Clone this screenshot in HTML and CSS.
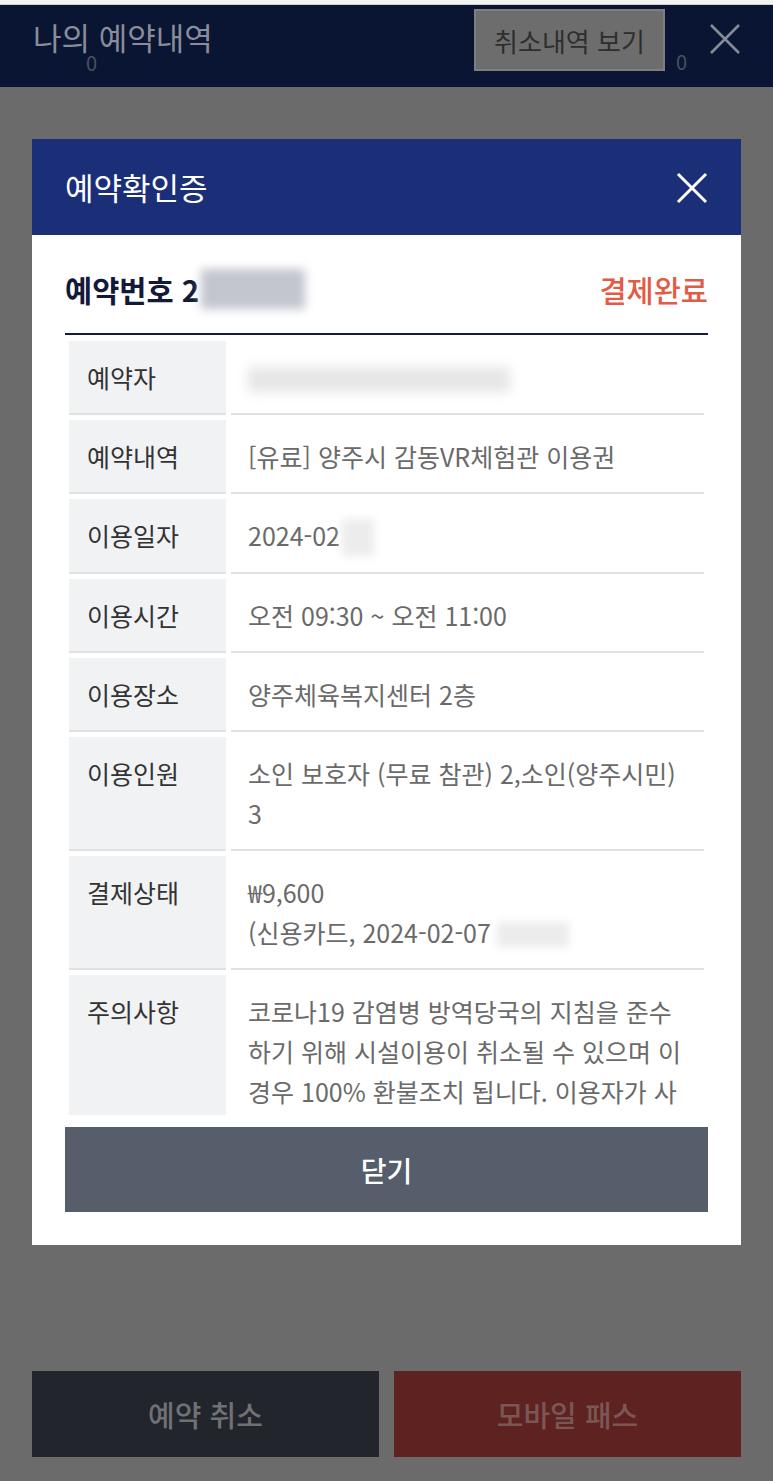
FILE: index.html
```html
<!DOCTYPE html>
<html lang="ko">
<head>
<meta charset="utf-8">
<title>나의 예약내역</title>
<link rel="stylesheet" href="styles.css">
</head>
<body>
<div class="page">
  <div class="topstrip"></div>
  <header class="appbar">
    <h1 class="appbar-title">나의 예약내역<span class="badge badge-title">0</span></h1>
    <div class="appbar-actions">
      <button class="cancel-history">취소내역 보기</button>
      <span class="badge badge-btn">0</span>
      <span class="appbar-close">
        <svg viewBox="0 0 32 32" width="32" height="32"><path d="M2 2 L30 30 M30 2 L2 30" stroke="#878b95" stroke-width="2.6" fill="none"/></svg>
      </span>
    </div>
  </header>
  <main class="content"></main>
  <footer class="bottom-bar">
    <button class="btn-cancel">예약 취소</button>
    <button class="btn-pass">모바일 패스</button>
  </footer>
</div>

<div class="modal">
  <div class="modal-head">
    <h2 class="modal-title">예약확인증</h2>
    <span class="modal-close">
      <svg viewBox="0 0 32 32" width="32" height="32"><path d="M2 2 L30 30 M30 2 L2 30" stroke="#ffffff" stroke-width="3" fill="none"/></svg>
    </span>
  </div>
  <div class="modal-body">
    <div class="status-row">
      <div class="res-no">예약번호 2<span class="blur blur-no"></span></div>
      <div class="res-state">결제완료</div>
    </div>
    <div class="table-wrap">
      <div class="info-grid">
        <div class="lbl">예약자</div>
        <div class="val"><span class="blur blur-name"></span></div>

        <div class="lbl">예약내역</div>
        <div class="val">[유료] 양주시 감동VR체험관 이용권</div>

        <div class="lbl">이용일자</div>
        <div class="val">2024-02<span class="blur blur-date"></span></div>

        <div class="lbl">이용시간</div>
        <div class="val">오전 09:30 ~ 오전 11:00</div>

        <div class="lbl">이용장소</div>
        <div class="val">양주체육복지센터 2층</div>

        <div class="lbl">이용인원</div>
        <div class="val">소인 보호자 (무료 참관) 2,소인(양주시민)<br>3</div>

        <div class="lbl">결제상태</div>
        <div class="val">₩9,600<br>(신용카드, 2024-02-07<span class="blur blur-pay"></span></div>

        <div class="lbl">주의사항</div>
        <div class="val">코로나19 감염병 방역당국의 지침을 준수하기 위해 시설이용이 취소될 수 있으며 이 경우 100% 환불조치 됩니다. 이용자가 사전에 취소하는 경우 환불 규정에 따릅니다.</div>
      </div>
    </div>
    <button class="btn-close">닫기</button>
  </div>
</div>
</body>
</html>
```
FILE: styles.css
```css
* { box-sizing: border-box; }
html, body { margin: 0; padding: 0; }
body {
  background: #6b6b6b;
  font-family: "Noto Sans CJK KR", "Noto Sans", sans-serif;
}
button { font-family: inherit; cursor: pointer; }

.page {
  min-height: 100vh;
  display: flex;
  flex-direction: column;
}
.topstrip { height: 5px; background: #f3f3f3; border-bottom: 1px solid #cfcfcf; }
.appbar {
  height: 82px;
  background: #0a1534;
  display: flex;
  align-items: flex-start;
  justify-content: space-between;
  padding: 0 32px 0 33px;
  position: relative;
}
.appbar-title {
  margin: 0;
  font-size: 31px;
  font-weight: 400;
  color: #898d99;
  line-height: 34px;
  padding-top: 15px;
  position: relative;
}
.badge {
  position: absolute;
  font-size: 20px;
  color: #4a5061;
  line-height: 20px;
}
.badge-title { left: 53px; top: 48px; }
.appbar-actions {
  display: flex;
  align-items: flex-start;
  position: relative;
}
.cancel-history {
  margin-top: 4px;
  width: 191px;
  height: 62px;
  background: #6d6d6d;
  border: 2px solid #7e7e7e;
  color: #2e2e2e;
  font-size: 26px;
  padding: 0;
}
.badge-btn { left: 202px; top: 47px; }
.appbar-close {
  margin-left: 44px;
  margin-top: 18px;
  width: 32px;
  height: 32px;
  display: block;
}
.appbar-close svg { display: block; }

.content { flex: 1; }

.bottom-bar {
  display: flex;
  gap: 15px;
  padding: 0 32px 24px;
}
.bottom-bar button {
  flex: 1;
  height: 86px;
  border: 0;
  font-size: 29px;
  font-weight: 500;
}
.btn-cancel { background: #22252c; color: #707174; }
.btn-pass { background: #5e2220; color: #7a5755; }

/* modal */
.modal {
  position: absolute;
  top: 139px;
  left: 32px;
  width: 709px;
  background: #ffffff;
}
.modal-head {
  height: 96px;
  background: #1b2f79;
  display: flex;
  align-items: center;
  justify-content: space-between;
  padding: 0 33px;
}
.modal-title {
  margin: 0;
  color: #ffffff;
  font-size: 31px;
  font-weight: 400;
  padding-bottom: 2px;
}
.modal-close { width: 32px; height: 32px; display: block; margin-top: 1px; }
.modal-close svg { display: block; }

.modal-body { padding: 34px 33px 33px; }
.status-row {
  display: flex;
  justify-content: space-between;
  align-items: center;
  height: 66px;
  line-height: 40px;
  padding-bottom: 24px;
  border-bottom: 2px solid #161b3a;
}
.res-no {
  font-size: 29.5px;
  font-weight: 700;
  color: #131938;
  display: flex;
  align-items: center;
}
.res-state {
  font-size: 29.5px;
  font-weight: 500;
  color: #e35a45;
}

.blur {
  display: inline-block;
  height: 1em;
  vertical-align: -0.15em;
}
.blur-no {
  width: 104px;
  height: 40px;
  margin-left: 2px;
  background: #c3c5cf;
  filter: blur(5px);
}
.blur-name {
  width: 262px;
  background: #e6e6e6;
  filter: blur(6px);
}
.blur-date {
  width: 32px;
  height: 1.5em;
  vertical-align: -0.4em;
  background: #ececec;
  filter: blur(4px);
  margin-left: 2px;
}
.blur-pay {
  width: 72px;
  background: #ececec;
  filter: blur(4px);
  margin-left: 6px;
}

.table-wrap {
  margin-top: 6px;
  height: 774px;
  overflow: hidden;
  padding: 0 4px;
}
.info-grid {
  display: grid;
  grid-template-columns: 157px 1fr;
  column-gap: 5px;
  row-gap: 5px;
}
.lbl, .val {
  font-size: 25px;
  line-height: 40px;
  padding: 16px 14px 16px 18px;
  border-bottom: 2px solid #e1e1e1;
}
.lbl { background: #f1f2f4; color: #333333; }
.val { color: #6a6a6a; padding-left: 17px; padding-right: 14px; }

.btn-close {
  display: block;
  width: 100%;
  height: 85px;
  margin-top: 12px;
  background: #565d6b;
  border: 0;
  color: #ffffff;
  font-size: 28px;
  font-weight: 500;
}
```
